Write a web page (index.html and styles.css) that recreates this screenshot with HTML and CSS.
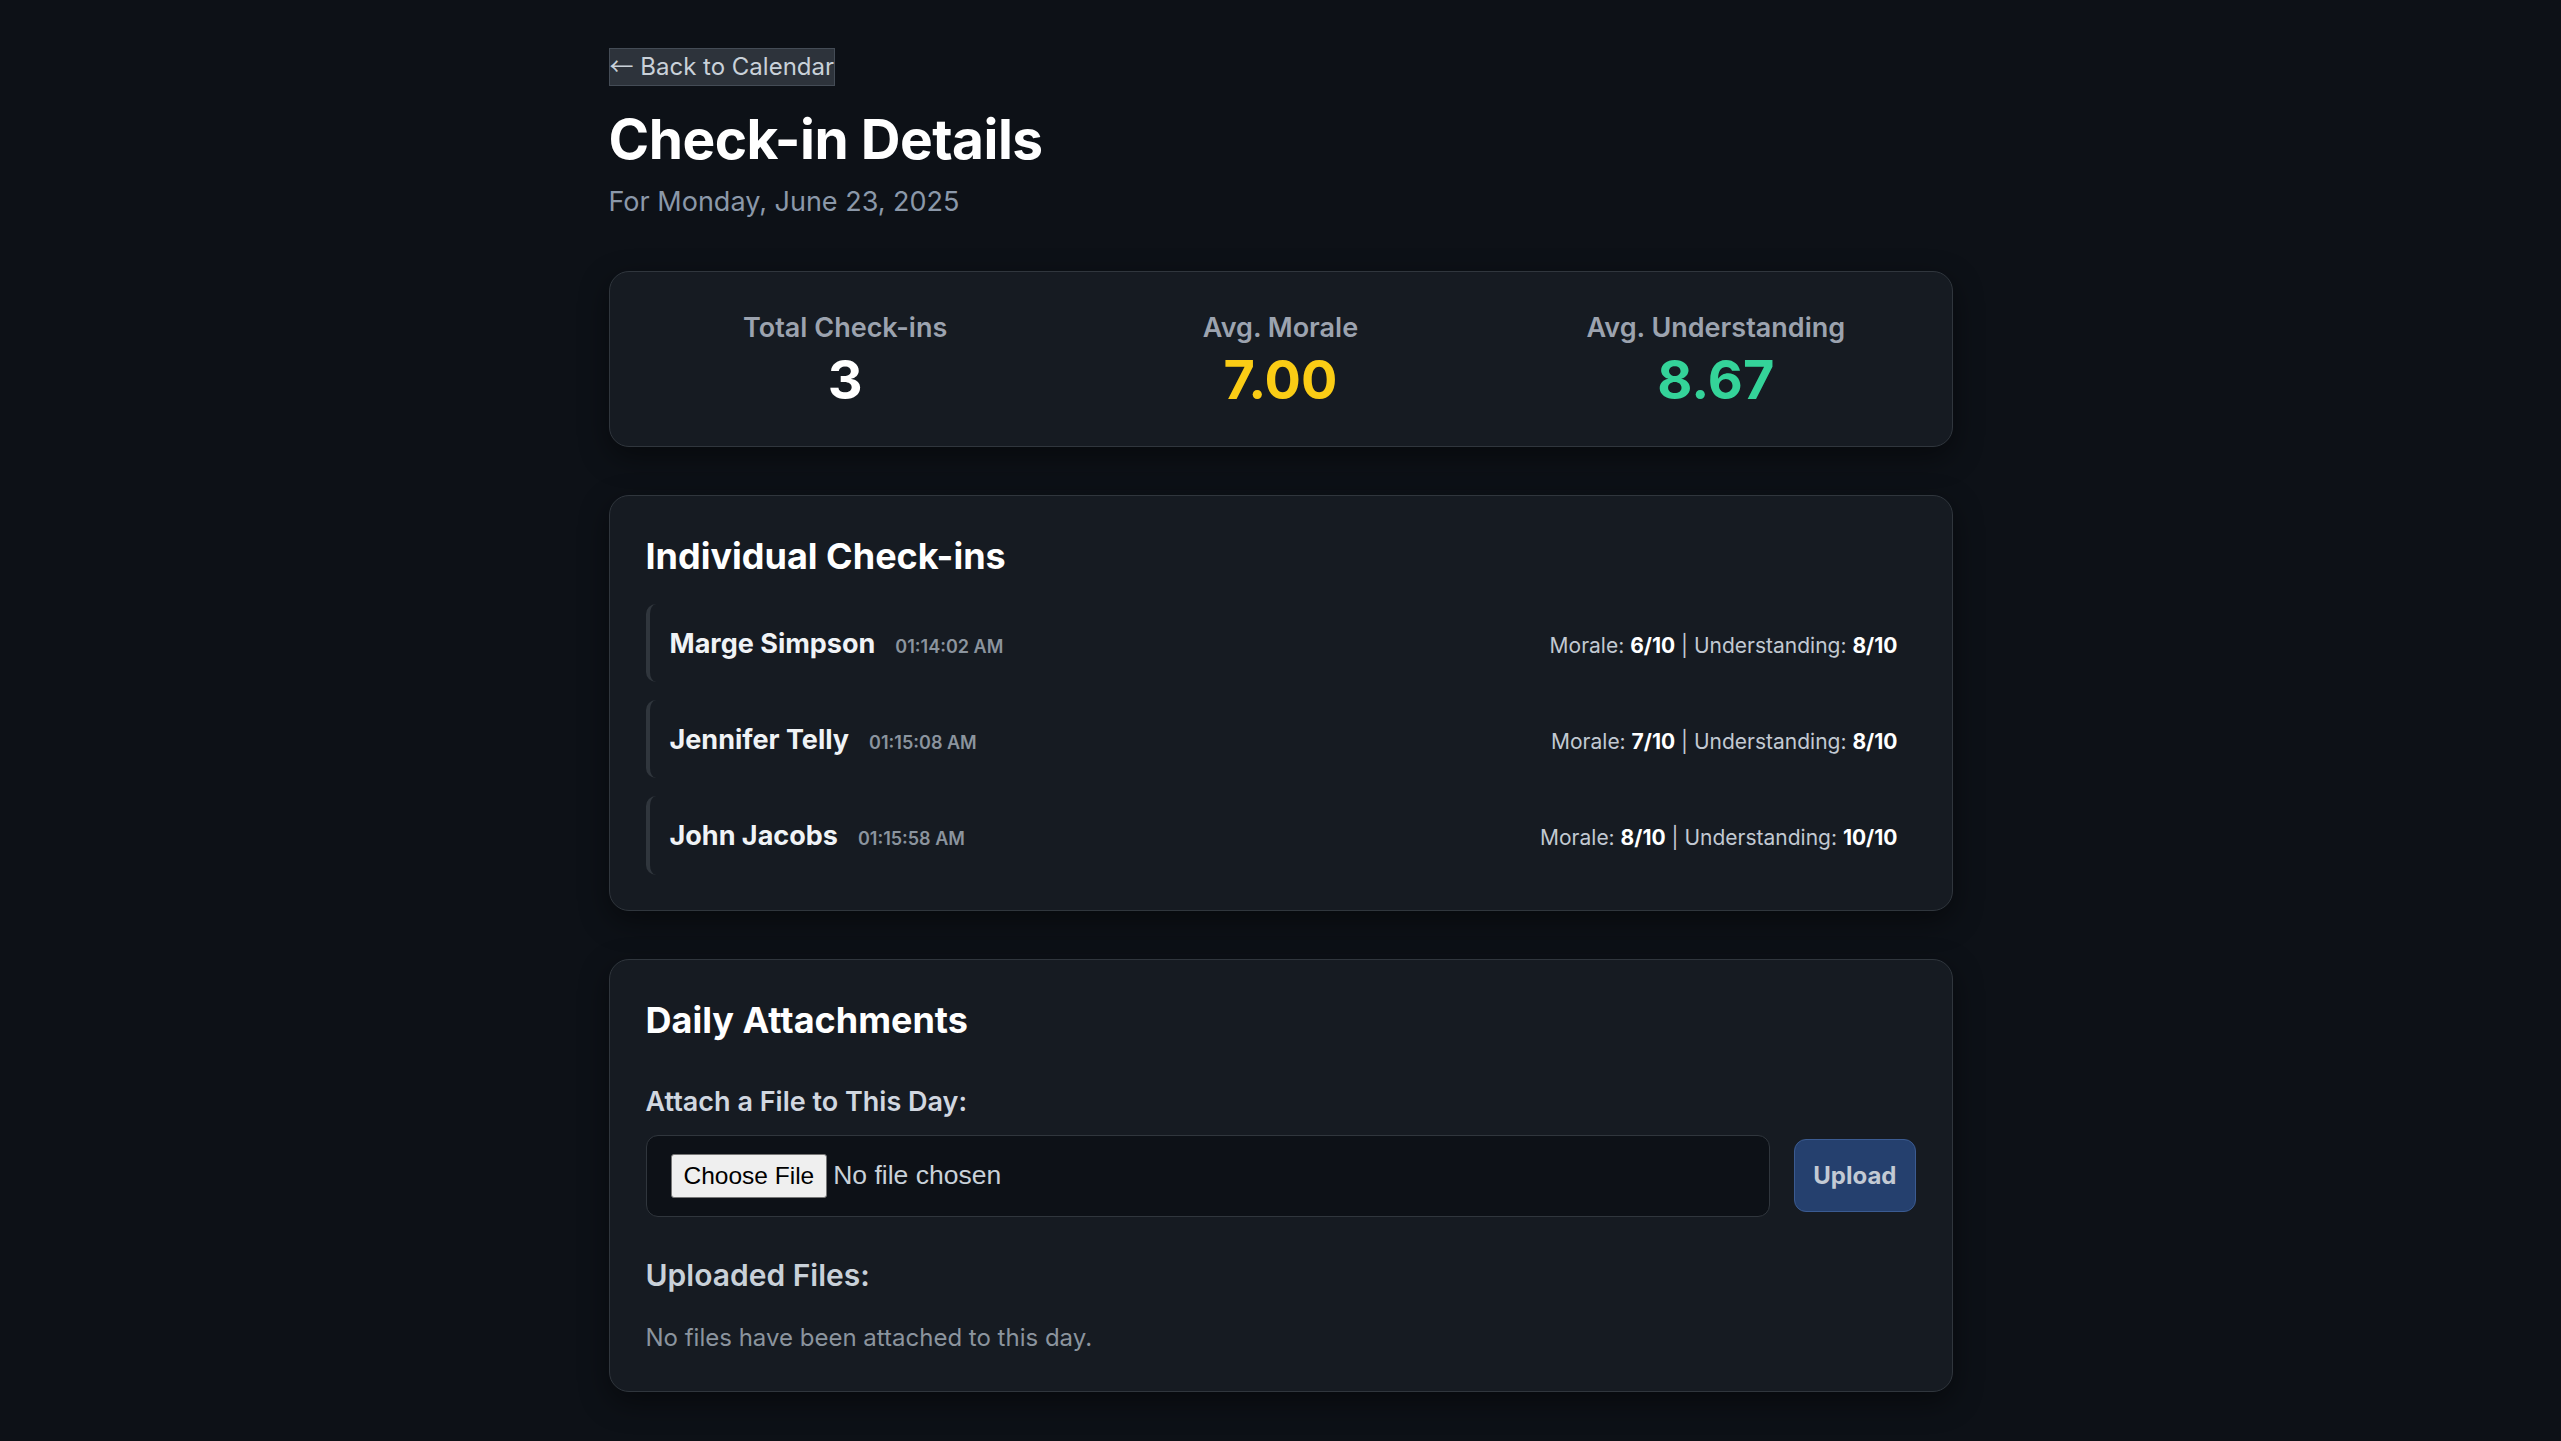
FILE: index.html
```html
<!DOCTYPE html>
<html lang="en">
<head>
<meta charset="utf-8">
<title>Check-in Details</title>
<link rel="stylesheet" href="styles.css">
</head>
<body>
<main class="page">
  <button class="back-btn" type="button"><span class="arrow">←</span> Back to Calendar</button>
  <h1 class="title">Check-in Details</h1>
  <p class="subtitle">For Monday, June 23, 2025</p>

  <section class="card stats">
    <div class="stat">
      <div class="stat-label">Total Check-ins</div>
      <div class="stat-value">3</div>
    </div>
    <div class="stat">
      <div class="stat-label">Avg. Morale</div>
      <div class="stat-value yellow">7.00</div>
    </div>
    <div class="stat">
      <div class="stat-label">Avg. Understanding</div>
      <div class="stat-value green">8.67</div>
    </div>
  </section>

  <section class="card list-card">
    <h2 class="card-title">Individual Check-ins</h2>
    <ul class="rows">
      <li class="row">
        <div class="who"><span class="name">Marge Simpson</span><span class="time">01:14:02 AM</span></div>
        <div class="scores">Morale: <b>6/10</b> | Understanding: <b>8/10</b></div>
      </li>
      <li class="row">
        <div class="who"><span class="name">Jennifer Telly</span><span class="time">01:15:08 AM</span></div>
        <div class="scores">Morale: <b>7/10</b> | Understanding: <b>8/10</b></div>
      </li>
      <li class="row">
        <div class="who"><span class="name">John Jacobs</span><span class="time">01:15:58 AM</span></div>
        <div class="scores">Morale: <b>8/10</b> | Understanding: <b>10/10</b></div>
      </li>
    </ul>
  </section>

  <section class="card attach-card">
    <h2 class="card-title">Daily Attachments</h2>
    <label class="field-label" for="file">Attach a File to This Day:</label>
    <div class="upload-row">
      <input id="file" class="file-input" type="file">
      <button class="upload-btn" type="button">Upload</button>
    </div>
    <h3 class="sub-title">Uploaded Files:</h3>
    <p class="empty">No files have been attached to this day.</p>
  </section>
</main>
</body>
</html>
```

FILE: styles.css
```css
* { box-sizing: border-box; }

html, body {
  margin: 0;
  padding: 0;
  background: #0d1117;
  min-height: 100%;
}

body {
  font-family: Inter, "Noto Sans", "Liberation Sans", sans-serif;
  color: #e6edf3;
}

.page {
  width: 1344px;
  margin: 0 auto;
  padding-top: 48px;
  padding-bottom: 48px;
}

.back-btn {
  display: block;
  font-family: Inter, sans-serif;
  font-size: 24px;
  line-height: 36px;
  height: 38px;
  color: #c9d1d9;
  background: #2d333b;
  border: 1px solid #444c56;
  padding: 0;
  margin: 0;
  cursor: pointer;
}

.arrow {
  font-family: "Noto Sans CJK JP", sans-serif;
  font-weight: 400;
  line-height: 1;
}

.title {
  margin: 20px 0 0;
  font-size: 55px;
  font-weight: 700;
  line-height: normal;
  color: #ffffff;
  letter-spacing: -0.5px;
}

.subtitle {
  margin: 13px 0 0;
  font-size: 27px;
  line-height: normal;
  color: #8b98a9;
}

.card {
  background: #161b22;
  border: 1px solid #30363d;
  border-radius: 20px;
  box-shadow: 0 10px 30px rgba(0, 0, 0, 0.45);
}

.stats {
  margin-top: 53px;
  padding: 39px 36px;
  display: grid;
  grid-template-columns: repeat(3, 1fr);
  column-gap: 36px;
  text-align: center;
}

.stat-label {
  font-size: 27px;
  font-weight: 600;
  color: #9ca3af;
  line-height: normal;
}

.stat-value {
  margin-top: 9px;
  font-size: 54px;
  font-weight: 700;
  line-height: 1;
  color: #ffffff;
}

.stat-value.yellow { color: #facc15; }
.stat-value.green { color: #34d399; }

.list-card {
  margin-top: 48px;
  padding: 38px 36px 35px;
}

.card-title {
  margin: 0;
  font-size: 36px;
  font-weight: 700;
  line-height: normal;
  color: #ffffff;
}

.rows {
  list-style: none;
  margin: 26px 0 0;
  padding: 0;
  display: flex;
  flex-direction: column;
  gap: 18px;
}

.row {
  display: flex;
  align-items: baseline;
  justify-content: space-between;
  padding: 22.6px 18px 22.6px 20px;
  border-left: 4px solid #30363d;
  border-radius: 10px;
}

.who {
  display: flex;
  align-items: baseline;
  gap: 20px;
}

.name {
  font-size: 27px;
  font-weight: 700;
  color: #f0f3f6;
}

.time {
  font-size: 18px;
  font-weight: 600;
  color: #8b949e;
}

.scores {
  font-size: 21px;
  color: #c2c9d2;
}

.scores b {
  color: #ffffff;
  font-weight: 700;
}

.attach-card {
  margin-top: 48px;
  padding: 38px 36px 39px;
}

.field-label {
  display: block;
  margin-top: 43px;
  font-size: 27px;
  font-weight: 600;
  line-height: normal;
  color: #d1d7e0;
}

.upload-row {
  margin-top: 17px;
  display: flex;
  align-items: center;
  gap: 24px;
}

.file-input {
  flex: 1;
  min-width: 0;
  background: #0d1117;
  border: 1px solid #30363d;
  border-radius: 12px;
  padding: 18px 24px;
  font-family: "Liberation Sans", Arial, sans-serif;
  font-size: 26.5px;
  color: #c9d1d9;
}

.file-input::file-selector-button {
  font-family: "Liberation Sans", Arial, sans-serif;
  font-size: 24.5px;
  color: #000000;
  background: #efefef;
  border: 1px solid #767676;
  border-radius: 3px;
  padding: 7px 12px;
  margin-right: 6px;
}

.upload-btn {
  font-family: Inter, sans-serif;
  font-size: 24px;
  font-weight: 700;
  line-height: normal;
  color: #c3cad4;
  background: #25406e;
  border: 1px solid #3b5b91;
  border-radius: 12px;
  padding: 21px 18px;
}

.sub-title {
  margin: 40px 0 0;
  font-size: 30px;
  font-weight: 600;
  line-height: normal;
  color: #c9d1d9;
}

.empty {
  margin: 30px 0 0;
  font-size: 24px;
  line-height: normal;
  color: #8b949e;
}
```
